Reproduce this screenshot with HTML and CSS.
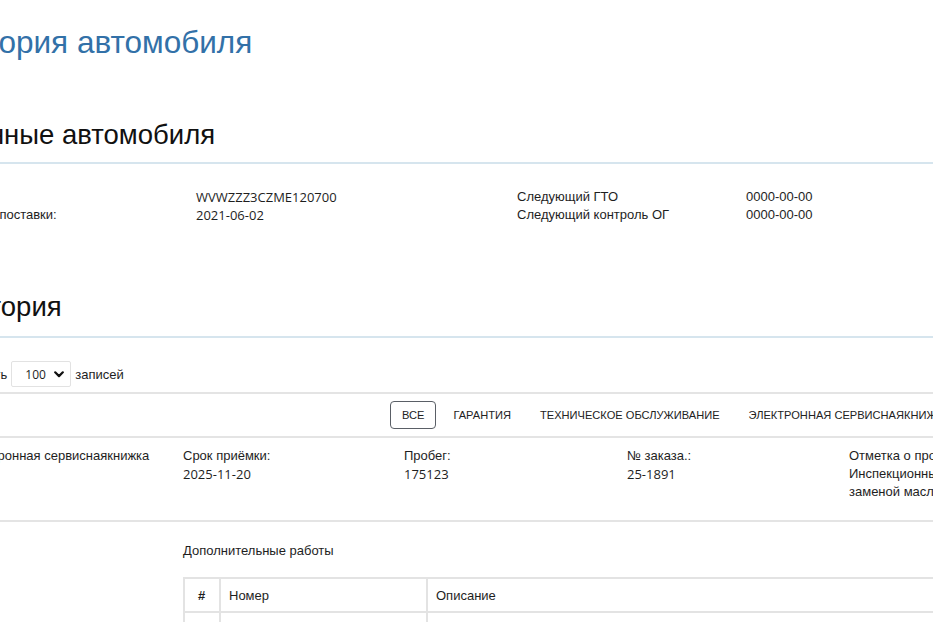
FILE: index.html
```html
<!DOCTYPE html>
<html lang="ru">
<head>
<meta charset="utf-8">
<title>История автомобиля</title>
<link rel="stylesheet" href="styles.css">
</head>
<body>
<div class="page">
  <h1 class="title">История автомобиля</h1>

  <h2 class="section-head">Данные автомобиля</h2>
  <div class="car-data">
    <div class="lbl">VIN:</div>
    <div class="val mono">WVWZZZ3CZME120700</div>
    <div class="lbl">Следующий ГТО</div>
    <div class="val">0000-00-00</div>
    <div class="lbl">Дата поставки:</div>
    <div class="val mono">2021-06-02</div>
    <div class="lbl">Следующий контроль ОГ</div>
    <div class="val">0000-00-00</div>
  </div>

  <h2 class="section-head history-head">История</h2>
  <div class="length-row">
    <span>Показать</span>
    <div class="select">
      <span class="select-value">100</span>
      <svg class="chev" width="10" height="7" viewBox="0 0 10 7"><path d="M1.2 1.3 L5 5.1 L8.8 1.3" fill="none" stroke="#111" stroke-width="2.2" stroke-linecap="round" stroke-linejoin="round"/></svg>
    </div>
    <span>записей</span>
  </div>

  <div class="tabs">
    <button class="tab active">Все</button>
    <button class="tab">Гарантия</button>
    <button class="tab">Техническое обслуживание</button>
    <button class="tab">Электронная сервиснаякнижка</button>
  </div>

  <div class="record">
    <div class="cell"><div>Электронная сервиснаякнижка</div></div>
    <div class="cell"><div>Срок приёмки:</div><div class="mono">2025-11-20</div></div>
    <div class="cell"><div>Пробег:</div><div class="mono">175123</div></div>
    <div class="cell"><div>№ заказа.:</div><div class="mono">25-1891</div></div>
    <div class="cell last"><div>Отметка о проведении работ:</div><div>Инспекционный сервис с заменой масла</div></div>
  </div>

  <div class="details">
    <div class="details-title">Дополнительные работы</div>
    <table class="works">
      <thead>
        <tr><th class="num">#</th><th class="code">Номер</th><th class="desc">Описание</th></tr>
      </thead>
      <tbody>
        <tr><td class="num">1</td><td></td><td></td></tr>
      </tbody>
    </table>
  </div>
</div>
</body>
</html>
```

FILE: styles.css
```css
html, body {
  margin: 0;
  padding: 0;
  background: #fff;
  overflow: hidden;
}
body {
  font-family: "Liberation Sans", Arial, sans-serif;
  font-size: 13px;
  color: #1e1e1e;
}
.page {
  margin-left: -45px;
  width: 1250px;
}
.mono {
  font-family: "Open Sans", "Liberation Sans", sans-serif;
}
.title {
  margin: 23px 0 0 -9px;
  font-size: 31.5px;
  line-height: 38px;
  font-weight: normal;
  color: #3271a8;
}
.section-head {
  margin: 57px 0 0;
  padding-bottom: 10px;
  font-size: 27.5px;
  line-height: 34px;
  font-weight: normal;
  color: #111;
  border-bottom: 2px solid #d6e5ee;
}
.history-head {
  margin-top: 66px;
  padding-bottom: 12px;
}
.car-data {
  display: grid;
  grid-template-columns: 229px 321px 229px 321px;
  padding: 24px 0 0 12px;
  line-height: 18px;
}
.length-row {
  display: flex;
  align-items: center;
  gap: 4px;
  margin: 23px 0 0 -3px;
  height: 26px;
}
.select {
  display: flex;
  align-items: center;
  width: 60px;
  height: 26px;
  box-sizing: border-box;
  border: 1px solid #e2e2e2;
  border-radius: 2px;
  padding: 0 6px 0 13px;
  justify-content: space-between;
}
.select-value {
  font-family: "Open Sans", sans-serif;
  font-size: 12px;
}
.tabs {
  display: flex;
  align-items: center;
  gap: 5px;
  margin-top: 5px;
  padding: 7px 0 7px 435px;
  border-top: 2px solid #e4e4e4;
  border-bottom: 2px solid #e4e4e4;
}
.tab {
  font-family: "Liberation Sans", Arial, sans-serif;
  font-size: 11.1px;
  text-transform: uppercase;
  color: #222;
  background: none;
  border: 1px solid transparent;
  border-radius: 4px;
  height: 28px;
  padding: 0 11px;
  white-space: nowrap;
}
.tab.active {
  border-color: #5a5f66;
}
.record {
  display: grid;
  grid-template-columns: 221px 221px 223px 222px 190px;
  padding: 9px 0 19px 7px;
  line-height: 18px;
  border-bottom: 2px solid #e4e4e4;
}
.details {
  padding-left: 228px;
}
.details-title {
  margin-top: 20px;
  line-height: 18px;
}
.works {
  margin-top: 17px;
  width: 820px;
  border-collapse: collapse;
}
.works th, .works td {
  border: 2px solid #e3e3e3;
  height: 32px;
  padding: 0 8px;
  text-align: left;
  font-weight: normal;
}
.works th.num {
  width: 19px;
  padding: 0 8px 0 7px;
  text-align: center;
  font-weight: bold;
}
.works th.code {
  width: 189px;
}
```
